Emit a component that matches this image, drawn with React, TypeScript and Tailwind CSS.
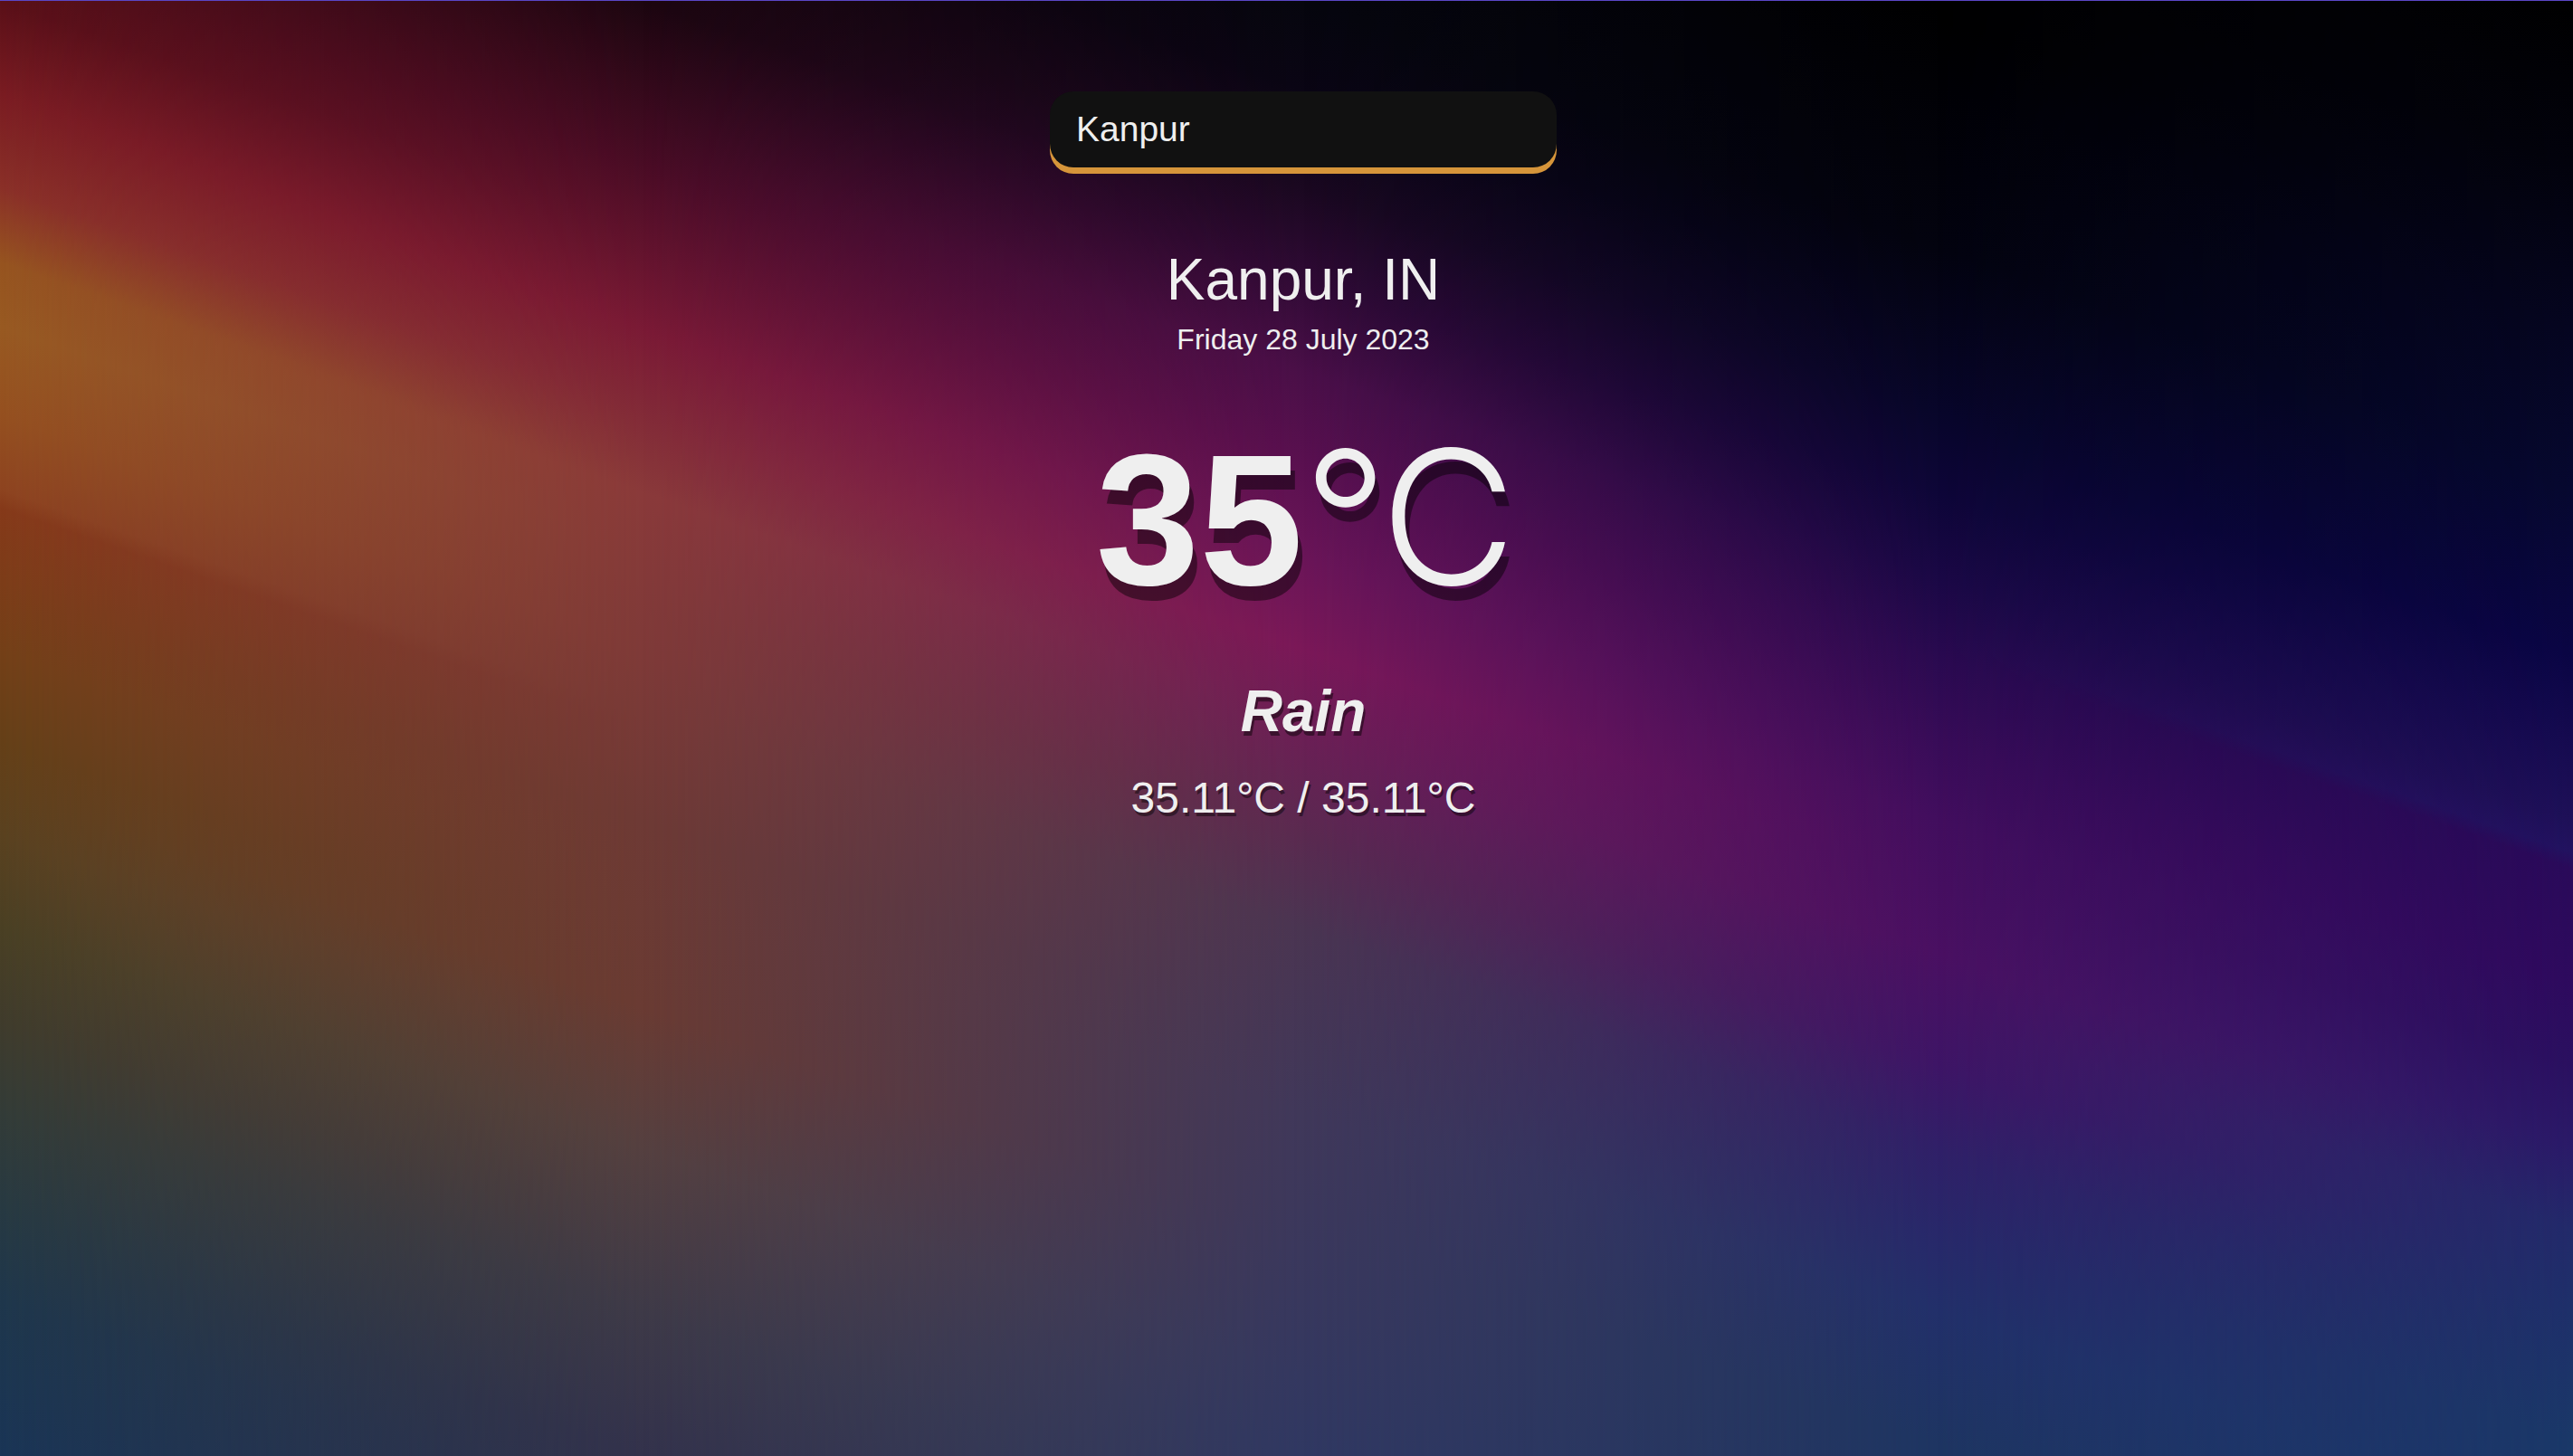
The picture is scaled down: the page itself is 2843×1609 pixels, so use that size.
import { useState } from 'react';

// Background is built from five angled gradients, one per "column" of the wallpaper,
// blended left to right with horizontal masks.
const layers = [
  'bg-[linear-gradient(199deg,#000_0%,#1a0508_20%,#3a0a12_30%,#5a1018_37.85%,#7a1c22_41.8%,#8a3028_45.8%,#965420_49%,#985a22_51.75%,#955020_55.6%,#8e4420_58.7%,#863a1a_59.5%,#744018_65.6%,#654018_69.5%,#5a4220_73.5%,#4a4024_77.5%,#403c2c_81.4%,#333c38_85.4%,#283a42_89.3%,#1f374c_93.3%,#1a3556_100%)]',
  'bg-[linear-gradient(199deg,#000_10%,#1c0610_28.4%,#4a0c25_35.4%,#7a1a35_42.4%,#8a3a3a_49.4%,#7e3a38_56.4%,#6e3a35_63.4%,#6a3b33_71.4%,#554040_77.4%,#3e3a48_84.4%,#33324c_90.5%,#2a3050_100%)] [mask-image:linear-gradient(to_right,transparent_0%,black_24.97%)]',
  'bg-[linear-gradient(199deg,#000_0%,#06060e_18.7%,#0a0514_22.5%,#1a0820_26.6%,#300a35_30.6%,#4a0f48_34.5%,#5a1050_38.5%,#6a1558_42.4%,#7a1858_46.4%,#6a2055_50.3%,#5a2a50_54.3%,#4a3552_58.3%,#40385a_66.2%,#38385e_74.1%,#303862_80.8%,#283860_100%)] [mask-image:linear-gradient(to_right,transparent_24.97%,black_50.65%)]',
  'bg-[linear-gradient(199deg,#000_9.4%,#03030f_19.9%,#08062a_26.9%,#0e0638_30.4%,#1a0845_33.9%,#2a0a50_37.4%,#380c58_40.9%,#420e5e_44.3%,#4a1062_50%,#3e1566_54.8%,#302068_58.4%,#28286a_61.9%,#22306a_65.3%,#1e3562_71%,#1a3862_100%)] [mask-image:linear-gradient(to_right,transparent_50.65%,black_75.27%)]',
  'bg-[linear-gradient(199deg,#000_0%,#02020c_7%,#050520_14%,#060830_21%,#0a0545_28%,#150a50_31.5%,#1e1058_35%,#221260_36.4%,#2a0a5a_37.1%,#2e0a5e_42%,#2a1060_45.5%,#2a1a68_49%,#222a6a_52.5%,#1e306a_56%,#1a3868_61.6%,#1a3c6a_100%)] [mask-image:linear-gradient(to_right,transparent_75.27%,black_100%)]',
];

export default function App() {
  const [city, setCity] = useState('Kanpur');

  return (
    <div className="grid min-h-screen border-t border-[#5a46c6] bg-black font-['Liberation_Sans',Arial,sans-serif]">
      {layers.map((cls, i) => (
        <div key={i} className={`[grid-area:1/1] ${cls}`} />
      ))}

      <main className="[grid-area:1/1] relative z-10 flex flex-col items-center pl-[37px] text-[#efefef]">
        {/* search */}
        <input
          value={city}
          onChange={(e) => setCity(e.target.value)}
          className="mt-[100px] h-[84px] w-[560px] rounded-[26px] bg-[#111111] pl-[29px] pr-[29px] text-[39px] text-[#efefef] shadow-[0_7px_0_#d6953a] outline-none"
        />

        {/* location */}
        <h1 className="mt-[92px] text-[64px] leading-none">Kanpur, IN</h1>
        <p className="mt-[18px] text-[32px] leading-none">Friday 28 July 2023</p>

        {/* temperature */}
        <div className="mt-[77px] text-[206px] leading-none [text-shadow:5px_16px_0_rgba(0,0,0,0.45)]">
          <span className="font-bold">35</span>
          <span className="font-['Inter',sans-serif] font-light tracking-[-6px]">°C</span>
        </div>

        <p className="mt-[76px] text-[64px] font-bold italic leading-none [text-shadow:2px_5px_0_rgba(0,0,0,0.45)]">
          Rain
        </p>
        <p className="mt-[40px] text-[48px] leading-none [text-shadow:2px_4px_0_rgba(0,0,0,0.45)]">
          35.11°C / 35.11°C
        </p>
      </main>
    </div>
  );
}
